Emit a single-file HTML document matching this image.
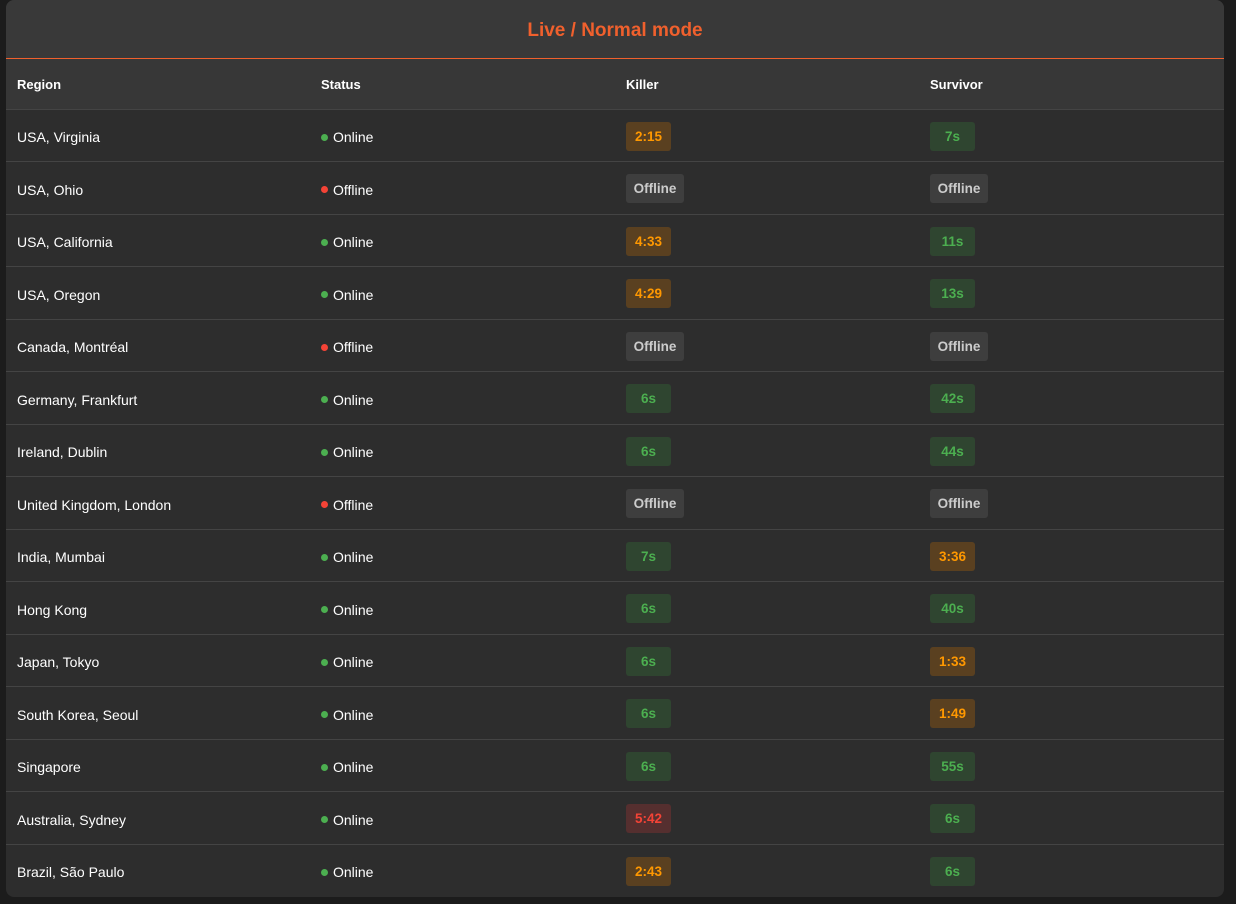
<!DOCTYPE html>
<html><head><meta charset="utf-8"><style>
html,body{margin:0;padding:0;background:#1c1c1c;width:1236px;height:904px;overflow:hidden;font-family:"Liberation Sans",sans-serif;}
.card{position:absolute;left:6px;top:0;width:1218px;height:897px;background:#2d2d2d;border-radius:8px;overflow:hidden;}
.title{height:58px;background:#393939;border-bottom:1px solid #f0602d;color:#f0602d;font-weight:bold;font-size:19px;text-align:center;line-height:62px;}
.row{position:relative;height:51.5px;border-bottom:1px solid #444;color:#fff;font-size:14px;}
.row.h{height:49.5px;background:#373737;font-weight:bold;font-size:13px;}
.row div{position:absolute;top:2px;height:100%;display:flex;align-items:center;}
.row.h div{top:1px}
.c1{left:11px}.c2{left:315px}.c3{left:620px}.c4{left:924px}
.dot{display:inline-block;width:7px;height:7px;border-radius:50%;margin-right:5px;}
.on{background:#4caf50}.off{background:#f44336}
.b{display:inline-block;height:29px;line-height:29px;padding:0 7px;border-radius:3px;font-weight:bold;font-size:13.5px;min-width:45px;text-align:center;box-sizing:border-box;margin-top:-2px}
.o{background:#5a4020;color:#ff9800}.g{background:#2f4530;color:#4caf50}.x{background:#3e3e3e;color:#ccc;min-width:58px}.r{background:#552f2f;color:#f44336}
</style></head><body><div class="card">
<div class="title">Live / Normal mode</div>
<div class="row h"><div class="c1">Region</div><div class="c2">Status</div><div class="c3">Killer</div><div class="c4">Survivor</div></div>
<div class="row"><div class="c1">USA, Virginia</div><div class="c2"><span class="dot on"></span>Online</div><div class="c3"><span class="b o">2:15</span></div><div class="c4"><span class="b g">7s</span></div></div>
<div class="row"><div class="c1">USA, Ohio</div><div class="c2"><span class="dot off"></span>Offline</div><div class="c3"><span class="b x">Offline</span></div><div class="c4"><span class="b x">Offline</span></div></div>
<div class="row"><div class="c1">USA, California</div><div class="c2"><span class="dot on"></span>Online</div><div class="c3"><span class="b o">4:33</span></div><div class="c4"><span class="b g">11s</span></div></div>
<div class="row"><div class="c1">USA, Oregon</div><div class="c2"><span class="dot on"></span>Online</div><div class="c3"><span class="b o">4:29</span></div><div class="c4"><span class="b g">13s</span></div></div>
<div class="row"><div class="c1">Canada, Montréal</div><div class="c2"><span class="dot off"></span>Offline</div><div class="c3"><span class="b x">Offline</span></div><div class="c4"><span class="b x">Offline</span></div></div>
<div class="row"><div class="c1">Germany, Frankfurt</div><div class="c2"><span class="dot on"></span>Online</div><div class="c3"><span class="b g">6s</span></div><div class="c4"><span class="b g">42s</span></div></div>
<div class="row"><div class="c1">Ireland, Dublin</div><div class="c2"><span class="dot on"></span>Online</div><div class="c3"><span class="b g">6s</span></div><div class="c4"><span class="b g">44s</span></div></div>
<div class="row"><div class="c1">United Kingdom, London</div><div class="c2"><span class="dot off"></span>Offline</div><div class="c3"><span class="b x">Offline</span></div><div class="c4"><span class="b x">Offline</span></div></div>
<div class="row"><div class="c1">India, Mumbai</div><div class="c2"><span class="dot on"></span>Online</div><div class="c3"><span class="b g">7s</span></div><div class="c4"><span class="b o">3:36</span></div></div>
<div class="row"><div class="c1">Hong Kong</div><div class="c2"><span class="dot on"></span>Online</div><div class="c3"><span class="b g">6s</span></div><div class="c4"><span class="b g">40s</span></div></div>
<div class="row"><div class="c1">Japan, Tokyo</div><div class="c2"><span class="dot on"></span>Online</div><div class="c3"><span class="b g">6s</span></div><div class="c4"><span class="b o">1:33</span></div></div>
<div class="row"><div class="c1">South Korea, Seoul</div><div class="c2"><span class="dot on"></span>Online</div><div class="c3"><span class="b g">6s</span></div><div class="c4"><span class="b o">1:49</span></div></div>
<div class="row"><div class="c1">Singapore</div><div class="c2"><span class="dot on"></span>Online</div><div class="c3"><span class="b g">6s</span></div><div class="c4"><span class="b g">55s</span></div></div>
<div class="row"><div class="c1">Australia, Sydney</div><div class="c2"><span class="dot on"></span>Online</div><div class="c3"><span class="b r">5:42</span></div><div class="c4"><span class="b g">6s</span></div></div>
<div class="row" style="border-bottom:none"><div class="c1">Brazil, São Paulo</div><div class="c2"><span class="dot on"></span>Online</div><div class="c3"><span class="b o">2:43</span></div><div class="c4"><span class="b g">6s</span></div></div>
</div></body></html>
